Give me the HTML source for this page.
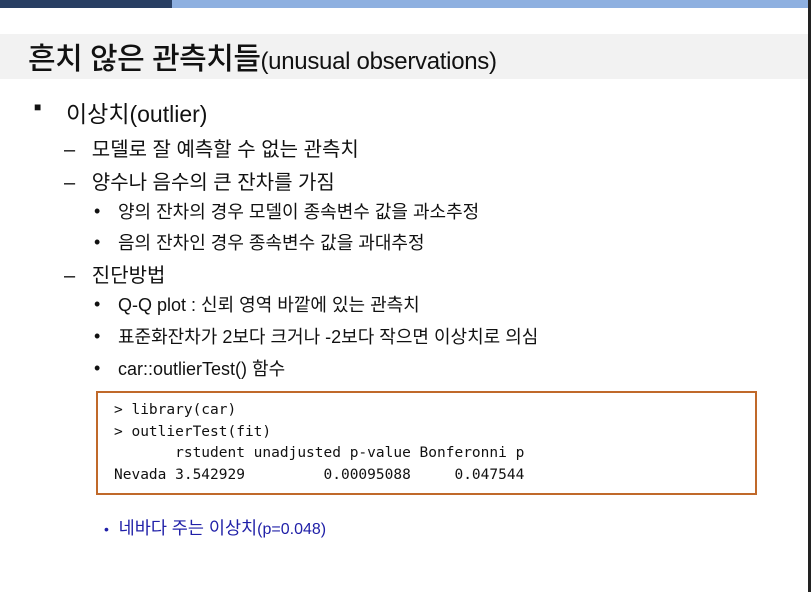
<!DOCTYPE html>
<html><head><meta charset="utf-8"><style>
body{margin:0;width:811px;height:592px;background:#fff;position:relative;overflow:hidden;font-family:"Liberation Sans","Noto Sans CJK KR",sans-serif;color:#111}
.a{position:absolute;white-space:nowrap}
.bar1{left:0;top:0;width:172px;height:8px;background:#283f63}
.bar2{left:172px;top:0;width:639px;height:8px;background:#8eb0e0}
.band{left:0;top:34px;width:808px;height:45px;background:#f2f2f2}
.edge{left:808px;top:0;width:3px;height:592px;background:#222}
.l1{font-size:23px}
.l2{font-size:20px}
.l3{font-size:18px}
.dot{position:absolute;left:0;top:3px;font-size:18px}
.box{left:96px;top:391px;width:657px;height:100px;border:2px solid #c0692a}
pre{margin:0;font-family:"DejaVu Sans Mono","Liberation Mono",monospace;font-size:14.5px;line-height:21.7px;color:#111}
</style></head><body>
<div class="a bar1"></div><div class="a bar2"></div>
<div class="a band"></div><div class="a edge"></div>
<div class="a" style="left:28px;top:34px;font-size:30px;font-weight:500;letter-spacing:-0.5px">흔치 않은 관측치들<span style="font-size:24px;letter-spacing:-0.3px">(unusual observations)</span></div>
<div class="a" style="left:34px;top:100px;font-size:12px">■</div>
<div class="a l1" style="left:66px;top:95px">이상치(outlier)</div>
<div class="a l2" style="left:64px;top:133px">–&nbsp;&nbsp;&nbsp;모델로 잘 예측할 수 없는 관측치</div>
<div class="a l2" style="left:64px;top:166px">–&nbsp;&nbsp;&nbsp;양수나 음수의 큰 잔차를 가짐</div>
<div class="a l3" style="left:94px;top:198px"><span class="dot">•</span><span style="position:absolute;left:24px">양의 잔차의 경우 모델이 종속변수 값을 과소추정</span></div>
<div class="a l3" style="left:94px;top:229px"><span class="dot">•</span><span style="position:absolute;left:24px">음의 잔차인 경우 종속변수 값을 과대추정</span></div>
<div class="a l2" style="left:64px;top:259px">–&nbsp;&nbsp;&nbsp;진단방법</div>
<div class="a l3" style="left:94px;top:291px"><span class="dot">•</span><span style="position:absolute;left:24px">Q-Q plot : 신뢰 영역 바깥에 있는 관측치</span></div>
<div class="a l3" style="left:94px;top:323px"><span class="dot">•</span><span style="position:absolute;left:24px">표준화잔차가 2보다 크거나 -2보다 작으면 이상치로 의심</span></div>
<div class="a l3" style="left:94px;top:355px"><span class="dot">•</span><span style="position:absolute;left:24px">car::outlierTest() 함수</span></div>
<div class="a box"><pre style="position:absolute;left:16px;top:7px">&gt; library(car)
&gt; outlierTest(fit)
       rstudent unadjusted p-value Bonferonni p
Nevada 3.542929         0.00095088     0.047544</pre></div>
<div class="a" style="left:104px;top:515px;font-size:17.5px;color:#2020a8"><span style="font-size:14px">•</span>&nbsp;&nbsp;네바다 주는 이상치<span style="font-size:16px">(p=0.048)</span></div>
</body></html>
